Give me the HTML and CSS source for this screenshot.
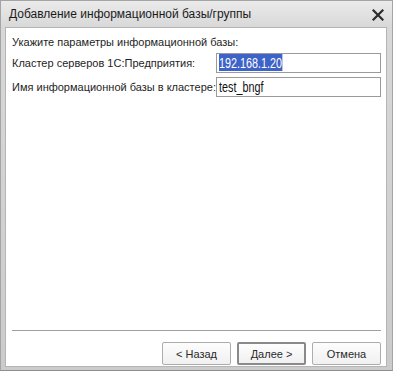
FILE: index.html
```html
<!DOCTYPE html>
<html lang="ru">
<head>
  <meta charset="UTF-8">
  <title>Добавление информационной базы/группы</title>
  <link rel="stylesheet" href="styles.css">
</head>
<body>
  <div class="window">
    <div class="titlebar">
      <span class="title">Добавление информационной базы/группы</span>
      <span class="close">
        <svg width="12" height="12" viewBox="0 0 12 12">
          <path d="M1.5 1.5 L10.5 10.5 M10.5 1.5 L1.5 10.5" stroke="#2b2b2b" stroke-width="2.2" stroke-linecap="square"/>
        </svg>
      </span>
    </div>
    <div class="panel">
      <div class="form">
        <div class="hint">Укажите параметры информационной базы:</div>
        <div class="row">
          <label>Кластер серверов 1С:Предприятия:</label>
          <div class="field"><span class="value sel">192.168.1.20</span></div>
        </div>
        <div class="row">
          <label>Имя информационной базы в кластере:</label>
          <div class="field"><span class="value">test_bngf</span></div>
        </div>
      </div>
      <div class="footer">
        <div class="buttons">
          <button class="btn">&lt; Назад</button>
          <button class="btn default">Далее &gt;</button>
          <button class="btn">Отмена</button>
        </div>
      </div>
    </div>
  </div>
</body>
</html>
```

FILE: styles.css
```css
body {
  margin: 0;
  background: #fff;
  font-family: "Liberation Sans", Arial, sans-serif;
  font-size: 11px;
  color: #1e1e1e;
}

.window {
  width: 393px;
  height: 371px;
  box-sizing: border-box;
  background: linear-gradient(to bottom, #ebebeb 0px, #d8d8d8 26px, #cbcbcb 100%);
  border: 1px solid #a4a4a4;
  border-bottom-color: #8e8e8e;
  padding: 0 5px 3px 4px;
  display: flex;
  flex-direction: column;
}

.titlebar {
  height: 26px;
  display: flex;
  align-items: center;
  justify-content: space-between;
  padding: 0 2px 0 4px;
}

.title {
  font-size: 12px;
  color: #1b1b1b;
}

.close {
  display: flex;
  width: 14px;
  height: 14px;
  align-items: center;
  justify-content: center;
  margin-top: 1px;
}

.panel {
  flex: 1;
  background: #fff;
  border: 1px solid #b5b5b5;
  display: flex;
  flex-direction: column;
  padding: 0 5px 0 6px;
}

.form {
  flex: 1;
  padding-top: 6px;
}

.hint {
  height: 16px;
  line-height: 16px;
}

.row {
  display: flex;
  align-items: center;
  justify-content: space-between;
  height: 22px;
  margin-top: 2px;
}

.row label {
  white-space: nowrap;
  line-height: 16px;
}

.field {
  width: 161px;
  height: 18px;
  border: 1px solid #9a9a9a;
  line-height: 18px;
  padding-left: 2px;
  overflow: hidden;
  white-space: nowrap;
}

.value {
  display: inline-block;
  font-size: 15px;
  line-height: 17px;
  color: #111;
  transform: scaleX(0.72);
  transform-origin: left center;
  vertical-align: top;
}

.sel {
  background: #3d62c8;
  color: #fff;
}

.footer {
  border-top: 1px solid #9f9f9f;
  height: 36px;
  display: flex;
  align-items: flex-start;
  justify-content: flex-end;
  padding-top: 11px;
  box-sizing: border-box;
}

.buttons {
  display: flex;
  gap: 6px;
}

.btn {
  width: 69px;
  height: 23px;
  font-family: "Liberation Sans", Arial, sans-serif;
  font-size: 11px;
  color: #2a2a2a;
  background: linear-gradient(to bottom, #fdfdfd, #f0f0f0);
  border: 1px solid #adadad;
  border-radius: 2px;
  padding: 0;
}

.btn.default {
  border: 2px solid #8a8a8a;
}
```
